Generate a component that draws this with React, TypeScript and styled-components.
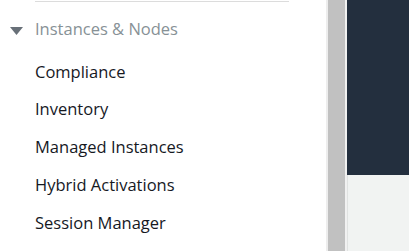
import React from "react";
import styled, { createGlobalStyle } from "styled-components";

const Global = createGlobalStyle`
  html, body { margin: 0; padding: 0; background: #fff; }
  body { font-family: "Open Sans", "Liberation Sans", sans-serif; }
`;

const Page = styled.div`
  display: flex;
  width: 409px;
  height: 251px;
  overflow: hidden;
`;

const Sidebar = styled.nav`
  width: 326px;
  flex: none;
  border-right: 2px solid #ededed;
  background: #fff;
`;

const TopRule = styled.div`
  margin: 1px 0 0 35px;
  width: 254px;
  height: 1px;
  background: #dcdcdc;
`;

const Section = styled.div`
  display: flex;
  align-items: flex-start;
  padding: 16px 0 12px 10px;
  gap: 12px;
  color: #879196;
  font-size: 16.5px;
  line-height: 22.5px;
`;

const Caret = styled.svg`
  width: 13px;
  height: 8px;
  margin-top: 9px;
  fill: #687078;
  flex: none;
`;

const List = styled.ul`
  list-style: none;
  margin: 0;
  padding: 0 0 0 35px;
`;

const Item = styled.li`
  height: 37.75px;
  line-height: 37.75px;
  font-size: 16.5px;
  color: #16191f;
  white-space: nowrap;
`;

const Scrollbar = styled.div`
  width: 17px;
  flex: none;
  background: #c1c1c1;
`;

const Gap = styled.div`
  width: 2px;
  flex: none;
  background: #f1f1f1;
`;

const Main = styled.div`
  flex: 1;
  display: flex;
  flex-direction: column;
`;

const Header = styled.div`
  height: 175px;
  background: #232f3e;
`;

const Body = styled.div`
  flex: 1;
  background: #f1f3f2;
  border-left: 1px solid #e0e2e1;
`;

const items = [
  "Compliance",
  "Inventory",
  "Managed Instances",
  "Hybrid Activations",
  "Session Manager",
];

export default function App() {
  return (
    <>
      <Global />
      <Page>
        <Sidebar>
          <TopRule />
          <Section>
            <Caret viewBox="0 0 13 8">
              <polygon points="0,0 13,0 6.5,8" />
            </Caret>
            <span>Instances &amp; Nodes</span>
          </Section>
          <List>
            {items.map((t) => (
              <Item key={t}>{t}</Item>
            ))}
          </List>
        </Sidebar>
        <Scrollbar />
        <Gap />
        <Main>
          <Header />
          <Body />
        </Main>
      </Page>
    </>
  );
}
